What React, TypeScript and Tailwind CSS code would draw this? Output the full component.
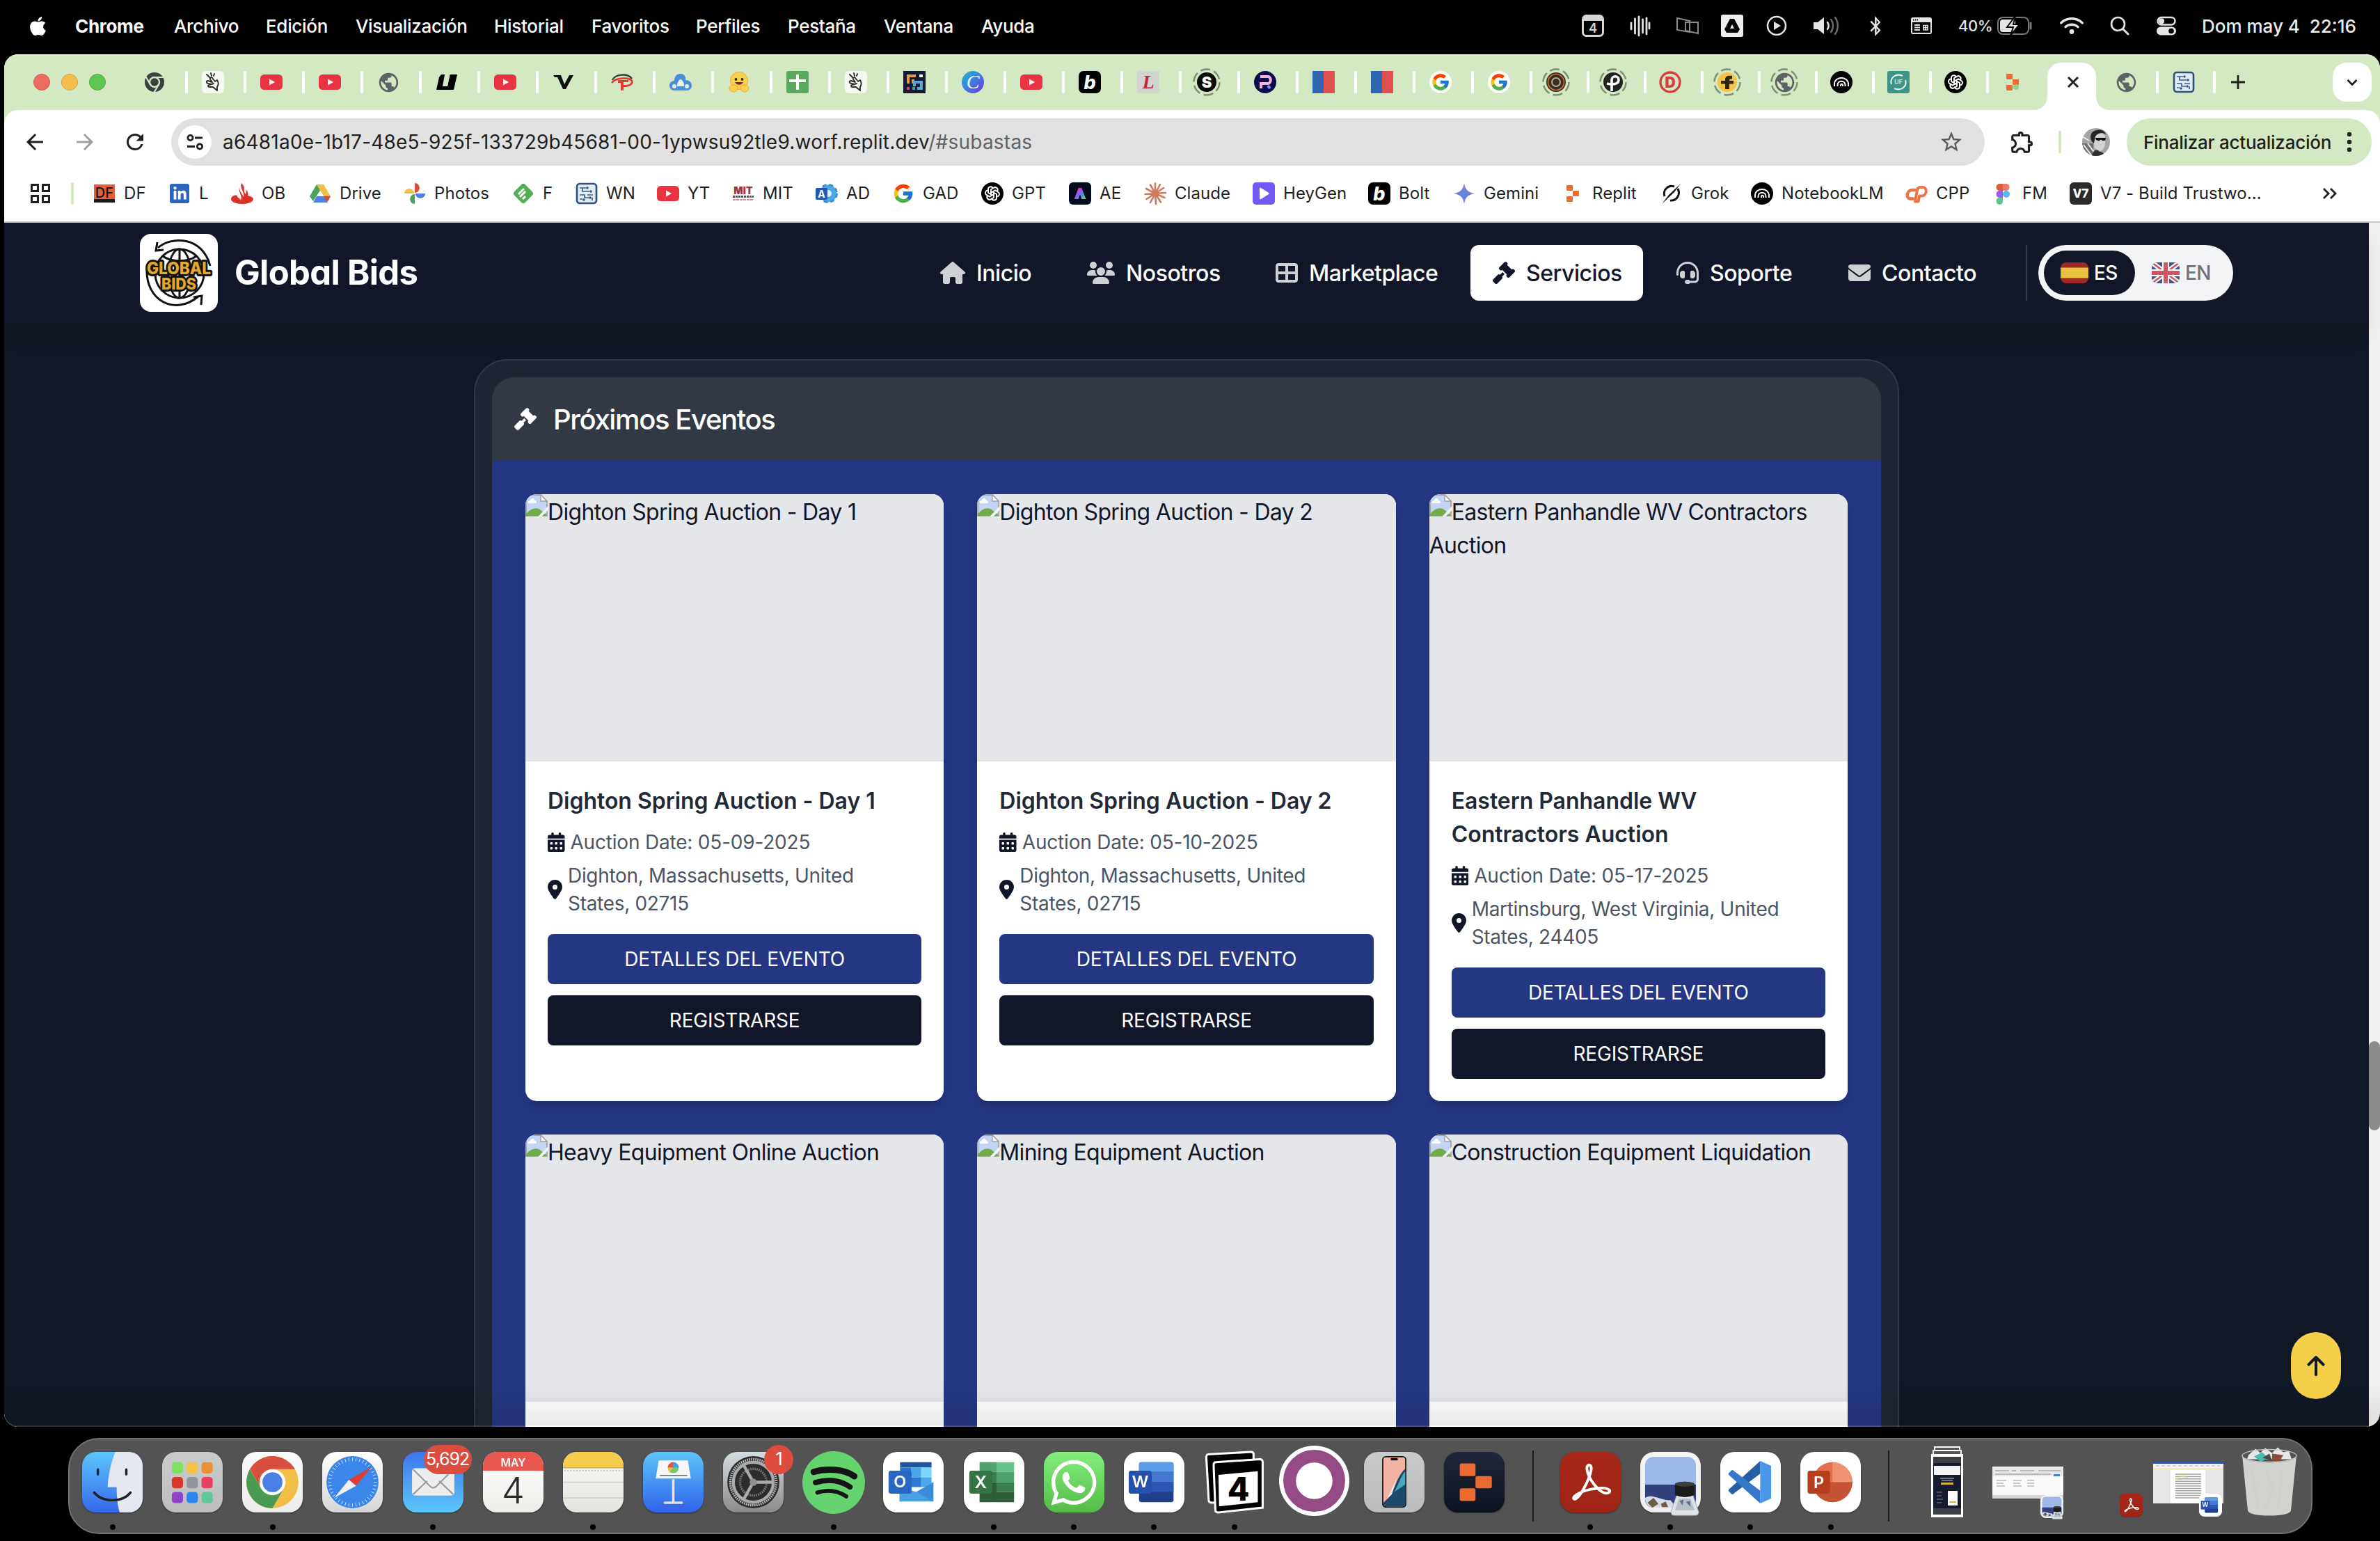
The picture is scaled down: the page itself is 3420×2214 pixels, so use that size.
import React from "react";
import {
  FaApple,
  FaHouse,
  FaUsers,
  FaTableCellsLarge,
  FaGavel,
  FaHeadset,
  FaEnvelope,
  FaCalendarDays,
  FaLocationDot,
  FaBluetoothB,
  FaLinkedinIn,
  FaWhatsapp,
  FaWifi,
} from "react-icons/fa6";
import { FcGoogle } from "react-icons/fc";
import { TbBrandOpenai } from "react-icons/tb";
import {
  MdPublic,
  MdStarBorder,
  MdOutlineExtension,
  MdRefresh,
  MdArrowBack,
  MdArrowForward,
} from "react-icons/md";

type Kids = { children?: React.ReactNode };

/* ------------------------------------------------------------------ */
/* Favicons, all drawn on a 32 x 32 grid                                */
/* ------------------------------------------------------------------ */

const Ico = ({ children }: Kids) => (
  <svg viewBox="0 0 32 32" className="size-8 shrink-0 overflow-visible">
    {children}
  </svg>
);

const Letter = ({
  t,
  fill = "#fff",
  size = 22,
  y = 24,
  font = "Inter",
  italic = false,
  weight = 800,
}: {
  t: string;
  fill?: string;
  size?: number;
  y?: number;
  font?: string;
  italic?: boolean;
  weight?: number;
}) => (
  <text
    x="16"
    y={y}
    textAnchor="middle"
    fontFamily={font}
    fontSize={size}
    fontWeight={weight}
    fontStyle={italic ? "italic" : "normal"}
    fill={fill}
  >
    {t}
  </text>
);

const Ring = () => (
  <circle cx="16" cy="16" r="18.5" fill="none" stroke="#7d8f77" strokeWidth="2.4" strokeDasharray="14 5.4" />
);

const ChromeDark = () => (
  <Ico>
    <circle cx="16" cy="16" r="14" fill="#3c4043" />
    <circle cx="16" cy="16" r="7" fill="none" stroke="#d3e8c3" strokeWidth="2.4" />
    <path d="M16 9H29M10 19.5L3.5 8.3M22 19.5L15.5 30.5" stroke="#d3e8c3" strokeWidth="2.2" />
  </Ico>
);

const Snap = () => (
  <Ico>
    <rect width="32" height="32" rx="6" fill="#f6faf2" />
    <path
      d="M22 28V23C24 20 24 16 22 13L19 15L15 10C13 8 11 10 12 12L15 16L9 14C6 14 6 17 9 18L14 19L10 20C8 21 9 23 11 23L16 23L22 28M14 19L17 18M7 5L11 9M13 3L14 7M18 4L17 7"
      fill="none"
      stroke="#2b2b2b"
      strokeWidth="1.9"
      strokeLinecap="round"
      strokeLinejoin="round"
    />
  </Ico>
);

const YouTube = () => (
  <Ico>
    <rect y="5" width="32" height="22" rx="5.5" fill="#ea3340" />
    <path d="M13 11.5V20.5L21 16Z" fill="#fff" />
  </Ico>
);

const Globe = () => <MdPublic className="size-[33px] shrink-0 text-[#5f6368]" />;

const UMark = () => (
  <Ico>
    <path d="M8 5H14L10.5 22H17L20.5 5H31L26 27H1L5 9Z" fill="#000" />
    <path d="M13 5L10 22H17L20.5 5Z" fill="#d3e8c3" />
  </Ico>
);

const VMark = () => (
  <Ico>
    <path d="M1 6H12L17 19L24 6H30L19 26H15L7 9H3Z" fill="#111" />
  </Ico>
);

const PRed = () => (
  <Ico>
    <path d="M2 13C6 4 24 3 30 11" fill="none" stroke="#2b4438" strokeWidth="2.4" />
    <path d="M1 17C7 9 27 9 30 14C32 20 24 22 16 21.5" fill="none" stroke="#e23b30" strokeWidth="2.8" />
    <path d="M10 13H25V16H18V20H22V23H18V28H14V17H10Z" fill="#e23b30" />
  </Ico>
);

const Cloud = () => (
  <Ico>
    <path d="M16 4C22 4 24 10 23 13C29 13 32 17 32 21C32 25 29 28 25 28H7C3 28 0 25 0 21C0 17 3 14 7 14C7 8 10 4 16 4Z" fill="#4b8fdc" />
    <path d="M16 12C19 12 22 20 21 22H11C10 20 13 12 16 12Z" fill="#e6f1e0" />
    <circle cx="7" cy="22" r="3" fill="#e6f1e0" />
    <circle cx="25" cy="22" r="3" fill="#e6f1e0" />
  </Ico>
);

const Hug = () => (
  <Ico>
    <circle cx="16" cy="14" r="12.5" fill="#f9d24b" stroke="#f0a93c" />
    <circle cx="11.5" cy="12" r="1.9" fill="#33302b" />
    <circle cx="20.5" cy="12" r="1.9" fill="#33302b" />
    <path d="M10.5 16H21.5C21 21 11 21 10.5 16Z" fill="#7b2b2b" />
    <ellipse cx="8" cy="25" rx="6" ry="5" fill="#f9d24b" stroke="#f0a93c" />
    <ellipse cx="24" cy="25" rx="6" ry="5" fill="#f9d24b" stroke="#f0a93c" />
  </Ico>
);

const Sheets = () => (
  <Ico>
    <rect width="32" height="32" rx="3" fill="#5aa95f" />
    <path d="M16 5V27M4 14H28" stroke="#fff" strokeWidth="4" />
  </Ico>
);

const Pixels = () => (
  <Ico>
    <rect width="32" height="32" fill="#161a30" />
    <path d="M5 5H18V9H9V18H5Z" fill="#e59b3c" />
    <path d="M12 12H16V18H12Z" fill="#e59b3c" />
    <path d="M23 5H28V9H23Z" fill="#fff" />
    <path d="M14 14H28V18H18V22H14ZM24 18H28V27H20V23H24Z" fill="#56a8d6" />
    <path d="M5 23H9V27H5Z" fill="#d24862" />
    <path d="M13 23H17V27H13Z" fill="#3aa890" />
  </Ico>
);

const Canva = () => (
  <Ico>
    <defs>
      <linearGradient id="canva" x1="0" y1="0" x2="1" y2="1">
        <stop offset="0" stopColor="#21b8d0" />
        <stop offset="0.5" stopColor="#3f7de0" />
        <stop offset="1" stopColor="#7a2be6" />
      </linearGradient>
    </defs>
    <circle cx="16" cy="16" r="16" fill="url(#canva)" />
    <Letter t="C" font="Liberation Serif" italic weight={400} size={28} y={25} />
  </Ico>
);

const Bolt = () => (
  <Ico>
    <rect width="32" height="32" rx="7" fill="#000" />
    <Letter t="b" italic size={27} y={25.5} />
  </Ico>
);

const LMark = () => (
  <Ico>
    <rect width="32" height="32" fill="#d2d4d0" />
    <Letter t="L" font="Liberation Serif" italic weight={700} fill="#c4243b" size={28} y={25} />
  </Ico>
);

const Disc = ({ bg, r = 16, children }: Kids & { bg: string; r?: number }) => (
  <Ico>
    <circle cx="16" cy="16" r={r} fill={bg} />
    {children}
  </Ico>
);

const Flag = () => (
  <Ico>
    <rect width="16" height="32" fill="#2f66b1" />
    <rect x="16" width="16" height="32" fill="#de514f" />
  </Ico>
);

const GoogleDisc = () => (
  <span className="flex size-8 shrink-0 items-center justify-center rounded-full bg-white">
    <FcGoogle className="size-7" />
  </span>
);

const Notebook = () => (
  <Disc bg="#000">
    <path d="M6 22V19C6 7 26 7 26 19V22M10.5 22V20C10.5 13 21.5 13 21.5 20V22M15 22V21C15 18 18 18 18 21V22" fill="none" stroke="#fff" strokeWidth="2" />
  </Disc>
);

const OpenAI = () => (
  <span className="flex size-8 shrink-0 items-center justify-center rounded-full bg-black text-white">
    <TbBrandOpenai className="size-6" />
  </span>
);

const ReplitMark = ({ dot = false }: { dot?: boolean }) => (
  <Ico>
    <rect x="7" y="4" width="9" height="8" rx="1" fill="#ee6c2c" />
    <rect x="16" y="12" width="9" height="8" rx="1" fill="#ee6c2c" />
    <rect x="7" y="20" width="9" height="8" rx="1" fill="#ee6c2c" />
    {dot && <circle cx="21" cy="23" r="4" fill="#8bd48a" />}
  </Ico>
);

const Circuit = () => (
  <Ico>
    <rect x="2" y="2" width="28" height="28" rx="4" fill="#e3eaf1" stroke="#2f4f80" strokeWidth="2.6" />
    <path d="M6 8H15M10 8V13H20M6 18H13V22H19M6 24H10M17 18H25M24 22V26" fill="none" stroke="#3a608f" strokeWidth="1.7" />
    <circle cx="17" cy="8" r="1.7" fill="#2f4f80" />
    <circle cx="22" cy="13" r="1.7" fill="#2f4f80" />
    <circle cx="21" cy="22" r="1.7" fill="#2f4f80" />
    <circle cx="12" cy="25" r="1.7" fill="#2f4f80" />
  </Ico>
);

type Tab = { id: string; icon: React.ReactNode };

const wideTabs: Tab[] = [
  { id: "chrome", icon: <ChromeDark /> },
  { id: "snap", icon: <Snap /> },
  { id: "yt1", icon: <YouTube /> },
  { id: "yt2", icon: <YouTube /> },
  { id: "globe", icon: <Globe /> },
  { id: "u", icon: <UMark /> },
  { id: "yt3", icon: <YouTube /> },
  { id: "v", icon: <VMark /> },
  { id: "p", icon: <PRed /> },
  { id: "cloud", icon: <Cloud /> },
  { id: "hug", icon: <Hug /> },
  { id: "sheets", icon: <Sheets /> },
  { id: "snap2", icon: <Snap /> },
  { id: "pixels", icon: <Pixels /> },
  { id: "canva", icon: <Canva /> },
  { id: "yt4", icon: <YouTube /> },
  { id: "bolt", icon: <Bolt /> },
  { id: "l", icon: <LMark /> },
  {
    id: "s",
    icon: (
      <Disc bg="#0a0a0a" r={14}>
        <Ring />
        <Letter t="S" size={22} y={24} weight={900} />
      </Disc>
    ),
  },
  {
    id: "pn",
    icon: (
      <Disc bg="#0c0b4f">
        <path d="M10 25V18H20C25 18 25 8 20 8H9" fill="none" stroke="#f0b6d4" strokeWidth="4" />
        <path d="M20 21L23 25" stroke="#7f8df5" strokeWidth="4" />
      </Disc>
    ),
  },
  { id: "f1", icon: <Flag /> },
  { id: "f2", icon: <Flag /> },
  { id: "g1", icon: <GoogleDisc /> },
  { id: "g2", icon: <GoogleDisc /> },
];

const narrowTabs: Tab[] = [
  {
    id: "bronze",
    icon: (
      <Disc bg="#3a2d22" r={14}>
        <Ring />
        <circle cx="16" cy="16" r="11.5" fill="none" stroke="#c4733a" strokeWidth="1.6" />
        <circle cx="16" cy="16" r="6" fill="none" stroke="#b9a894" strokeWidth="2" />
      </Disc>
    ),
  },
  {
    id: "rho",
    icon: (
      <Disc bg="#222" r={14}>
        <Ring />
        <path d="M14 29V13C14 6 24 6 24 13C24 19 15 20 7 18" fill="none" stroke="#fff" strokeWidth="3.6" />
      </Disc>
    ),
  },
  {
    id: "d",
    icon: (
      <Ico>
        <circle cx="16" cy="16" r="14" fill="none" stroke="#da3c3a" strokeWidth="3.4" />
        <Letter t="D" fill="#da3c3a" size={21} y={23.5} weight={900} />
      </Ico>
    ),
  },
  {
    id: "f",
    icon: (
      <Disc bg="#f6c443" r={14}>
        <Ring />
        <path d="M13 26V12C13 7.5 17 6 23 7V11.5C19.5 11.5 19 12 19 14H25V18.5H19V26ZM7 14H13V18.5H7Z" fill="#2e2614" />
      </Disc>
    ),
  },
  {
    id: "globe2",
    icon: (
      <span className="relative flex size-8 items-center justify-center">
        <Globe />
        <svg viewBox="0 0 32 32" className="absolute inset-0 size-8 overflow-visible">
          <Ring />
        </svg>
      </span>
    ),
  },
  { id: "nb", icon: <Notebook /> },
  {
    id: "uf",
    icon: (
      <Ico>
        <rect width="32" height="32" rx="3" fill="#3f9585" />
        <path d="M6 19C3 9 13 3 22 7M26 13C29 23 19 29 10 25" fill="none" stroke="#e4f3ef" strokeWidth="2" />
        <Letter t="UF" size={9} y={19} weight={600} fill="#cfe8e2" />
      </Ico>
    ),
  },
  { id: "oa", icon: <OpenAI /> },
  { id: "rep", icon: <ReplitMark dot /> },
];

/* ------------------------------------------------------------------ */
/* Bookmarks                                                            */
/* ------------------------------------------------------------------ */

const bookmarks: { t: string; w: string; icon: React.ReactNode }[] = [
  {
    t: "DF",
    w: "w-[108px]",
    icon: (
      <Ico>
        <rect x="1" y="3" width="30" height="26" fill="#e06038" />
        <rect x="1" y="24" width="30" height="5" fill="#1a1a1a" />
        <Letter t="DF" size={20} y={22} weight={500} fill="#111" />
      </Ico>
    ),
  },
  {
    t: "L",
    w: "w-[90px]",
    icon: (
      <span className="flex size-8 items-center justify-center">
        <span className="flex size-7 items-center justify-center rounded-[3px] bg-[#2d64bc] text-white">
          <FaLinkedinIn className="size-[21px]" />
        </span>
      </span>
    ),
  },
  {
    t: "OB",
    w: "w-[112px]",
    icon: (
      <Ico>
        <path d="M15 1C22 8 16 12 21 17C22 14 22 12 21 10C25 14 25 17 24 19C29 20 32 22 32 24C32 28 25 31 16 31C7 31 0 28 0 24C0 20 4 19 8 18C8 22 14 23 14 26C17 19 10 14 12 8C13 15 16 16 18 21C20 14 12 9 15 1Z" fill="#da3026" />
      </Ico>
    ),
  },
  {
    t: "Drive",
    w: "w-[136px]",
    icon: (
      <Ico>
        <path d="M11 3H21L16 12L6 27L1 20Z" fill="#4aa45c" />
        <path d="M11 3H21L31 20H21Z" fill="#f2bf42" />
        <path d="M11 20H31L26 29H6Z" fill="#4f81ea" />
        <path d="M21 20H31L26 29Z" fill="#d5503f" />
        <path d="M16 12L21 20H11Z" fill="#fff" />
      </Ico>
    ),
  },
  {
    t: "Photos",
    w: "w-[156px]",
    icon: (
      <Ico>
        <path d="M16 1C25 1 25 15 16 15Z" fill="#d9503f" />
        <path d="M31 16C31 25 17 25 17 16Z" fill="#4f81ea" />
        <path d="M16 31C7 31 7 17 16 17Z" fill="#4aa45c" />
        <path d="M1 16C1 7 15 7 15 16Z" fill="#f2bf42" />
      </Ico>
    ),
  },
  {
    t: "F",
    w: "w-[91px]",
    icon: (
      <Ico>
        <rect x="5" y="5" width="22" height="22" rx="4" transform="rotate(45 16 16)" fill="#52ae57" />
        <path d="M9 17L17 9M11 21L19 13M15 24L19 20" stroke="#fff" strokeWidth="3" />
      </Ico>
    ),
  },
  { t: "WN", w: "w-[117px]", icon: <Circuit /> },
  { t: "YT", w: "w-[108px]", icon: <YouTube /> },
  {
    t: "MIT",
    w: "w-[120px]",
    icon: (
      <Ico>
        <text x="16" y="17" textAnchor="middle" fontFamily="Inter" fontWeight="900" fontSize="14" fill="#9b3340">MIT</text>
        <path d="M1 20.5H31" stroke="#555" strokeWidth="3" strokeDasharray="3 1" />
        <path d="M1 25H31" stroke="#cf8a92" strokeWidth="2" strokeDasharray="4 1" />
      </Ico>
    ),
  },
  {
    t: "AD",
    w: "w-[110px]",
    icon: (
      <Ico>
        <circle cx="18" cy="16" r="12.5" fill="#4ea8e6" stroke="#3a8fd8" strokeWidth="3" strokeDasharray="6 4" />
        <circle cx="18" cy="16" r="5" fill="#dfeefa" />
        <rect y="8" width="17" height="17" rx="2" fill="#2457b2" />
        <text x="8.5" y="22" textAnchor="middle" fontFamily="Inter" fontWeight="700" fontSize="14" fill="#fff">A</text>
      </Ico>
    ),
  },
  { t: "GAD", w: "w-[128px]", icon: <FcGoogle className="size-8" /> },
  { t: "GPT", w: "w-[126px]", icon: <OpenAI /> },
  {
    t: "AE",
    w: "w-[108px]",
    icon: (
      <Ico>
        <defs>
          <linearGradient id="ae" x1="0" y1="0" x2="1" y2="1">
            <stop offset="0" stopColor="#f0403a" />
            <stop offset="0.35" stopColor="#b24bf0" />
            <stop offset="0.65" stopColor="#4a86f5" />
            <stop offset="1" stopColor="#6fd25a" />
          </linearGradient>
        </defs>
        <rect width="32" height="32" rx="6" fill="#050a1c" />
        <path d="M9 23L14.5 9H17.5L23 23H19L16 14L13 23Z" fill="url(#ae)" stroke="url(#ae)" strokeWidth="2" />
      </Ico>
    ),
  },
  {
    t: "Claude",
    w: "w-[156px]",
    icon: (
      <Ico>
        <path
          d="M16 16L16 1.5M16 16L23 3M16 16L28 8M16 16L31 15M16 16L29.5 22M16 16L24 28.5M16 16L17 31M16 16L9 29M16 16L3.5 24M16 16L1.5 17M16 16L3 9M16 16L9 3.5"
          stroke="#cf7a5a"
          strokeWidth="2.6"
          strokeLinecap="round"
        />
      </Ico>
    ),
  },
  {
    t: "HeyGen",
    w: "w-[166px]",
    icon: (
      <Ico>
        <rect width="32" height="32" rx="5" fill="#7559f4" />
        <path d="M10 9C10 8 11 7.5 12 8L23 15C24 16 24 16.5 23 17L12 24C11 24.5 10 24 10 23Z" fill="#fff" />
      </Ico>
    ),
  },
  { t: "Bolt", w: "w-[122px]", icon: <Bolt /> },
  {
    t: "Gemini",
    w: "w-[156px]",
    icon: (
      <Ico>
        <defs>
          <linearGradient id="gem" x1="0" y1="1" x2="1" y2="0">
            <stop offset="0" stopColor="#4a8ae8" />
            <stop offset="1" stopColor="#8d7cc9" />
          </linearGradient>
        </defs>
        <path d="M16 1C17.5 10.5 21.5 14.5 31 16C21.5 17.5 17.5 21.5 16 31C14.5 21.5 10.5 17.5 1 16C10.5 14.5 14.5 10.5 16 1Z" fill="url(#gem)" />
      </Ico>
    ),
  },
  { t: "Replit", w: "w-[142px]", icon: <ReplitMark /> },
  {
    t: "Grok",
    w: "w-[130px]",
    icon: (
      <Ico>
        <path d="M25 9C29 17 24 27 14 26M20 6C11 3 3 11 6 20" fill="none" stroke="#111" strokeWidth="3" />
        <path d="M2 31L12 18L29 2L20 14Z" fill="#111" />
      </Ico>
    ),
  },
  { t: "NotebookLM", w: "w-[222px]", icon: <Notebook /> },
  {
    t: "CPP",
    w: "w-[124px]",
    icon: (
      <Ico>
        <path d="M14 11H10C2 11 0 23 7 23.5H11" fill="none" stroke="#ec7445" strokeWidth="4.4" strokeLinecap="round" />
        <path d="M14 27.5L17 11C17.5 8 19 7 22 7H25C32 7 31 19 24 19.5H20L18.5 27.5Z" fill="none" stroke="#ec7445" strokeWidth="4" strokeLinejoin="round" />
      </Ico>
    ),
  },
  {
    t: "FM",
    w: "w-[112px]",
    icon: (
      <Ico>
        <path d="M16 2H11C5 2 5 12 11 12H16Z" fill="#e35b33" />
        <path d="M16 2H21C27 2 27 12 21 12H16Z" fill="#ee7a6a" />
        <path d="M16 12H11C5 12 5 22 11 22H16Z" fill="#9a5cf6" />
        <circle cx="21" cy="17" r="5" fill="#56b6f7" />
        <path d="M16 22H11C5 22 5 32 11 32C14 32 16 30 16 27Z" fill="#5cc98a" />
      </Ico>
    ),
  },
  {
    t: "V7 - Build Trustwo...",
    w: "w-[290px]",
    icon: (
      <Ico>
        <rect width="32" height="32" rx="6" fill="#2a2a2a" />
        <Letter t="V7" size={17} y={22} weight={800} />
      </Ico>
    ),
  },
];

/* ------------------------------------------------------------------ */
/* macOS menu bar                                                       */
/* ------------------------------------------------------------------ */

const menus: { t: string; w: string; bold?: boolean }[] = [
  { t: "Chrome", w: "w-[142px]", bold: true },
  { t: "Archivo", w: "w-[132px]" },
  { t: "Edición", w: "w-[129px]" },
  { t: "Visualización", w: "w-[199px]" },
  { t: "Historial", w: "w-[140px]" },
  { t: "Favoritos", w: "w-[150px]" },
  { t: "Perfiles", w: "w-[132px]" },
  { t: "Pestaña", w: "w-[138px]" },
  { t: "Ventana", w: "w-[140px]" },
  { t: "Ayuda", w: "w-[90px]" },
];

const Slot = ({ w, children }: Kids & { w: string }) => (
  <span className={`flex shrink-0 items-center justify-center ${w}`}>{children}</span>
);

function MenuBar() {
  return (
    <div className="flex h-[78px] items-center bg-black pr-[33px] pb-[4px] pl-[39px] text-[26px] text-white">
      <FaApple className="mr-[38px] size-[31px] shrink-0" />
      {menus.map((m) => (
        <span key={m.t} className={`shrink-0 whitespace-nowrap tracking-[-0.012em] ${m.w} ${m.bold ? "font-bold" : "font-medium"}`}>
          {m.t}
        </span>
      ))}
      <div className="ml-auto flex items-center text-[#e4e4e4]">
        <Slot w="w-[68px]">
          <Ico>
            <rect x="1.5" y="1.5" width="29" height="29" rx="5" fill="none" stroke="#d6d6d6" strokeWidth="3" />
            <path d="M1 3H31V9H1Z" fill="#d6d6d6" />
            <Letter t="4" size={18} y={26} weight={600} fill="#d6d6d6" />
          </Ico>
        </Slot>
        <Slot w="w-[68px]">
          <Ico>
            <path d="M3 12V21M8.5 6V27M14 3V30M19.5 7V26M25 5V28M29 12V20" stroke="#e4e4e4" strokeWidth="2.8" strokeLinecap="round" />
          </Ico>
        </Slot>
        <Slot w="w-[68px]">
          <Ico>
            <path d="M1 5L19 9V25L1 22ZM13 11H31V27L13 23Z" fill="none" stroke="#8b8b8b" strokeWidth="2" />
          </Ico>
        </Slot>
        <Slot w="w-[60px]">
          <Ico>
            <rect width="32" height="32" rx="3" fill="#eee" />
            <path d="M13 6H19L27 21L24 26H8L5 21ZM16 14L13 20H19Z" fill="#000" fillRule="evenodd" />
          </Ico>
        </Slot>
        <Slot w="w-[68px]">
          <Ico>
            <circle cx="16" cy="16" r="13" fill="none" stroke="#e4e4e4" strokeWidth="2.5" />
            <path d="M12 10V22L22 16Z" fill="#e4e4e4" />
          </Ico>
        </Slot>
        <Slot w="w-[74px]">
          <svg viewBox="0 0 40 32" className="h-8 w-10">
            <path d="M2 11H8L17 4V28L8 21H2Z" fill="#e4e4e4" />
            <path d="M22 11C24 14 24 18 22 21" fill="none" stroke="#e4e4e4" strokeWidth="2.5" strokeLinecap="round" />
            <path d="M27 7C31 12 31 20 27 25M33 4C38 11 38 21 33 28" fill="none" stroke="#6a6a6a" strokeWidth="2.5" strokeLinecap="round" />
          </svg>
        </Slot>
        <Slot w="w-[68px]">
          <FaBluetoothB className="h-[29px] w-[24px]" />
        </Slot>
        <Slot w="w-[64px]">
          <Ico>
            <rect x="1" y="4" width="30" height="24" rx="3" fill="#e4e4e4" />
            <path d="M4 7.5H11" stroke="#000" strokeWidth="2" strokeDasharray="1.5 1.5" />
            <rect x="3" y="11" width="26" height="15" fill="#000" />
            <path d="M6 15H14M6 18.5H14M6 22H14" stroke="#e4e4e4" strokeWidth="1.8" />
            <path d="M19 15.5H25V22H19ZM19 18.7H25M22 15.5V22" fill="none" stroke="#e4e4e4" strokeWidth="1.6" />
          </Ico>
        </Slot>
        <span className="ml-[21px] w-[56px] text-[22px] font-medium tracking-[-0.02em]">40%</span>
        <svg viewBox="0 0 52 28" className="mr-[38px] h-7 w-[52px]">
          <rect x="1" y="2" width="44" height="24" rx="7" fill="none" stroke="#777" strokeWidth="2" />
          <rect x="4" y="5" width="22" height="18" rx="4" fill="#e4e4e4" />
          <path d="M48 10V18" stroke="#777" strokeWidth="3" strokeLinecap="round" />
          <path d="M26 0L14 16H23L19 28L32 12H23Z" fill="#e4e4e4" stroke="#000" strokeWidth="2" />
        </svg>
        <FaWifi className="mr-[38px] size-[34px]" />
        <svg viewBox="0 0 28 28" className="mr-[39px] size-7">
          <circle cx="11.5" cy="11.5" r="9.5" fill="none" stroke="#e4e4e4" strokeWidth="2.6" />
          <path d="M18.5 18.5L26 26" stroke="#e4e4e4" strokeWidth="3" strokeLinecap="round" />
        </svg>
        <svg viewBox="0 0 28 28" className="mr-[37px] size-7">
          <rect x="1.5" y="2" width="25" height="10.5" rx="5.25" fill="none" stroke="#e4e4e4" strokeWidth="2.4" />
          <circle cx="7" cy="7.2" r="4" fill="#e4e4e4" />
          <rect y="15.5" width="28" height="12" rx="6" fill="#e4e4e4" />
          <circle cx="21" cy="21.5" r="3.8" fill="#000" />
        </svg>
        <span className="w-[223px] font-medium tracking-[0em] whitespace-nowrap text-[#ececec]">{"Dom may 4\u00a0\u00a022:16"}</span>
      </div>
    </div>
  );
}

/* ------------------------------------------------------------------ */
/* Browser chrome                                                       */
/* ------------------------------------------------------------------ */

function TabStrip() {
  return (
    <div className="flex h-20 items-center border-t-2 border-[#e4f2d9] bg-[#d3e8c3] pb-[2px]">
      <div className="flex w-[180px] shrink-0 gap-4 pl-[42px]">
        <span className="size-6 rounded-full border border-[#d5584c] bg-[#ec6a5e]" />
        <span className="size-6 rounded-full border border-[#dca03c] bg-[#f4bf4f]" />
        <span className="size-6 rounded-full border border-[#4fa73e] bg-[#61c554]" />
      </div>
      {wideTabs.map((t) => (
        <div key={t.id} className="flex w-[84px] shrink-0 items-center justify-between">
          <span className="flex w-[72px] justify-center">{t.icon}</span>
          <span className="h-8 w-1 rounded-full bg-white" />
        </div>
      ))}
      {narrowTabs.map((t, i) => (
        <div key={t.id} className="flex w-[82px] shrink-0 items-center justify-between">
          <span className="flex w-[68px] justify-center">{t.icon}</span>
          {i < narrowTabs.length - 1 && <span className="h-8 w-1 rounded-full bg-white" />}
        </div>
      ))}
      <div className="relative mt-[10px] -mb-[2px] ml-[2px] flex h-[68px] w-[70px] shrink-0 items-center justify-center self-start rounded-t-[20px] bg-white pb-3 pl-[4px]">
        <svg viewBox="0 0 20 20" className="absolute bottom-0 -left-5 size-5">
          <path d="M20 0V20H0C12 20 20 12 20 0Z" fill="#fff" />
        </svg>
        <svg viewBox="0 0 20 20" className="absolute -right-5 bottom-0 size-5">
          <path d="M0 0V20H20C8 20 0 12 0 0Z" fill="#fff" />
        </svg>
        <svg viewBox="0 0 20 20" className="size-5">
          <path d="M3 3L17 17M17 3L3 17" stroke="#1f1f1f" strokeWidth="3" />
        </svg>
      </div>
      <div className="flex w-[90px] shrink-0 items-center justify-between">
        <span className="flex w-[88px] justify-center">
          <Globe />
        </span>
        <span className="h-8 w-1 shrink-0 rounded-full bg-white" />
      </div>
      <div className="flex w-[82px] shrink-0 items-center justify-between">
        <span className="flex w-[72px] justify-center">
          <Circuit />
        </span>
        <span className="h-8 w-1 rounded-full bg-white" />
      </div>
      <svg viewBox="0 0 22 22" className="ml-[21px] size-[22px] shrink-0">
        <path d="M11 1V21M1 11H21" stroke="#1f1f1f" strokeWidth="2.8" />
      </svg>
      <span className="mr-3 ml-auto flex size-14 items-center justify-center rounded-[20px] bg-white">
        <svg viewBox="0 0 16 16" className="size-4">
          <path d="M1.5 5L8 11.5L14.5 5" fill="none" stroke="#1f1f1f" strokeWidth="2.8" />
        </svg>
      </span>
    </div>
  );
}

function Avatar() {
  return (
    <svg viewBox="0 0 40 40" className="size-10 shrink-0">
      <defs>
        <clipPath id="face">
          <circle cx="20" cy="20" r="20" />
        </clipPath>
      </defs>
      <g clipPath="url(#face)">
        <rect width="40" height="40" fill="#a5a5a5" />
        <path d="M0 22H16V40H0Z" fill="#6e6e6e" />
        <path d="M2 24L14 40M8 22L18 36M0 32L10 40M0 12L10 18" stroke="#ececec" strokeWidth="2" />
        <path d="M15 12C17 5 32 3 33 13L33 20C33 28 30 33 25 33L18 29Z" fill="#d3d3d3" />
        <path d="M12 13C12 1 31 -1 34 9C29 6 22 7 19 12L17 22C14 20 12 17 12 13Z" fill="#262626" />
        <path d="M19 14H34L33 18H29L27 16.5L24 18.5L20 17Z" fill="#111" />
        <path d="M14 40C16 32 20 29 25 34C29 34 31 36 32 40Z" fill="#303030" />
      </g>
    </svg>
  );
}

function Toolbar() {
  return (
    <div className="flex h-[92px] items-center rounded-t-[20px] bg-white pl-[26px] text-[#1f1f1f]">
      <MdArrowBack className="mr-[36px] size-9 shrink-0" />
      <MdArrowForward className="mr-[36px] size-9 shrink-0 text-[#a0a0a0]" />
      <MdRefresh className="mr-[34px] size-9 shrink-0" />
      <div className="flex h-[68px] w-[2606px] shrink-0 items-center rounded-full bg-[#e1e1e1] pr-[30px] pl-[10px]">
        <span className="mr-[16px] flex size-12 shrink-0 items-center justify-center rounded-full bg-white">
          <svg viewBox="0 0 28 28" className="size-7">
            <circle cx="7.5" cy="8" r="3.6" fill="none" stroke="#1f1f1f" strokeWidth="2.8" />
            <circle cx="21" cy="20.5" r="3.6" fill="none" stroke="#1f1f1f" strokeWidth="2.8" />
            <path d="M14 8H25M3 20.5H14" stroke="#1f1f1f" strokeWidth="2.8" />
          </svg>
        </span>
        <span className="text-[28px] tracking-[0.0078em] whitespace-nowrap">
          a6481a0e-1b17-48e5-925f-133729b45681-00-1ypwsu92tle9.worf.replit.dev
          <span className="text-[#5f6368]">/#subastas</span>
        </span>
        <MdStarBorder className="ml-auto size-9 text-[#5b5b5b]" />
      </div>
      <MdOutlineExtension className="mr-[33px] ml-[35px] size-[38px] shrink-0" />
      <span className="mr-[30px] h-8 w-1 shrink-0 rounded-full bg-[#d3e8c3]" />
      <Avatar />
      <div className="ml-[24px] flex h-[68px] w-[352px] shrink-0 items-center rounded-full bg-[#d3e8c3] pl-[24px]">
        <span className="w-[292px] text-[26px] font-medium tracking-[-0.01em] whitespace-nowrap">Finalizar actualización</span>
        <svg viewBox="0 0 8 30" className="h-[30px] w-2">
          <circle cx="4" cy="4" r="3.2" fill="#1f1f1f" />
          <circle cx="4" cy="15" r="3.2" fill="#1f1f1f" />
          <circle cx="4" cy="26" r="3.2" fill="#1f1f1f" />
        </svg>
      </div>
    </div>
  );
}

function BookmarkBar() {
  return (
    <div className="flex h-[70px] items-center border-b-2 border-[#c9c9c9] bg-white pb-[12px] pl-[38px] text-[#1f1f1f]">
      <svg viewBox="0 0 28 28" className="size-7 shrink-0">
        <path d="M1.5 1.5H10.5V10.5H1.5ZM17.5 1.5H26.5V10.5H17.5ZM1.5 17.5H10.5V26.5H1.5ZM17.5 17.5H26.5V26.5H17.5Z" fill="none" stroke="#1f1f1f" strokeWidth="3" />
      </svg>
      <span className="mr-[28px] ml-[30px] h-8 w-1 shrink-0 rounded-full bg-[#d3e8c3]" />
      {bookmarks.map((b) => (
        <span key={b.t} className={`flex shrink-0 items-center gap-3 text-[24px] font-normal tracking-[0.003em] whitespace-nowrap ${b.w}`}>
          {b.icon}
          {b.t}
        </span>
      ))}
      <svg viewBox="0 0 22 18" className="mr-[61px] ml-auto h-[18px] w-[22px]">
        <path d="M2 2L9 9L2 16M12 2L19 9L12 16" fill="none" stroke="#1f1f1f" strokeWidth="2.8" />
      </svg>
    </div>
  );
}

/* ------------------------------------------------------------------ */
/* Web page                                                             */
/* ------------------------------------------------------------------ */

function Logo() {
  return (
    <svg viewBox="0 0 112 112" className="size-28 shrink-0 rounded-2xl bg-white">
      <g fill="none" stroke="#111" strokeWidth="3">
        <circle cx="57" cy="57" r="35" />
        <ellipse cx="57" cy="57" rx="16" ry="35" />
        <path d="M57 22V92M33 32C45 41 69 41 81 32M33 82C45 73 69 73 81 82" />
        <path d="M26 20C45 3 90 3 101 46M10 50C8 96 50 118 84 90" />
        <path d="M25 12L23 24L34 23M88 102L89 89L77 91" />
      </g>
      <g fontFamily="Inter" fontWeight="800" textAnchor="middle" paintOrder="stroke" stroke="#14120c" strokeWidth="6" strokeLinejoin="round" fill="#e4a92c">
        <text x="56" y="58" fontSize="24" textLength="92" lengthAdjust="spacingAndGlyphs">GLOBAL</text>
        <text x="56" y="80" fontSize="23" textLength="50" lengthAdjust="spacingAndGlyphs">BIDS</text>
      </g>
    </svg>
  );
}

const navItems: { t: string; w: string; icon: React.ReactNode; active?: boolean }[] = [
  { t: "Inicio", w: "w-[79px]", icon: <FaHouse className="h-8 w-9" /> },
  { t: "Nosotros", w: "w-[135px]", icon: <FaUsers className="h-8 w-10" /> },
  { t: "Marketplace", w: "w-[184px]", icon: <FaTableCellsLarge className="size-8" /> },
  { t: "Servicios", w: "w-[136px]", icon: <FaGavel className="size-8" />, active: true },
  { t: "Soporte", w: "w-[119px]", icon: <FaHeadset className="size-8" /> },
  { t: "Contacto", w: "w-[135px]", icon: <FaEnvelope className="size-8" /> },
];

const FlagES = () => (
  <svg viewBox="0 0 40 30" className="h-[30px] w-10 rounded-[8px]">
    <path d="M0 0H40V30H0Z" fill="#9e2927" />
    <path d="M0 7.5H40V22.5H0Z" fill="#e8c23f" />
  </svg>
);

const FlagUK = () => (
  <svg viewBox="0 0 40 30" className="h-[30px] w-10 rounded-[8px]">
    <path d="M0 0H40V30H0Z" fill="#3e4f8a" />
    <path d="M0 0L40 30M40 0L0 30" stroke="#fff" strokeWidth="7" />
    <path d="M0 0L40 30M40 0L0 30" stroke="#cd5663" strokeWidth="2.6" />
    <path d="M20 0V30M0 15H40" stroke="#fff" strokeWidth="10" />
    <path d="M20 0V30M0 15H40" stroke="#cd5663" strokeWidth="6" />
  </svg>
);

function SiteHeader() {
  return (
    <header className="relative z-10 flex h-36 shrink-0 items-center bg-[#111629] px-[195px] text-white shadow-[0_20px_30px_-6px_rgba(0,0,0,0.12)]">
      <Logo />
      <span className="ml-[24px] text-[49px] font-bold tracking-[-0.014em] [font-feature-settings:'cv11']">Global Bids</span>
      <nav className="ml-auto flex gap-4">
        {navItems.map((n) => (
          <a
            key={n.t}
            className={`flex h-20 items-center gap-4 rounded-xl px-8 text-[32px] font-medium tracking-[-0.014em] ${
              n.active ? "bg-white text-[#111629]" : "text-white"
            }`}
          >
            <span className={n.active ? "" : "opacity-80"}>{n.icon}</span>
            <span className={`pt-[2px] whitespace-nowrap ${n.w}`}>{n.t}</span>
          </a>
        ))}
      </nav>
      <span className="mr-4 ml-[40px] h-20 w-[2px] bg-[#363a4b]" />
      <div className="flex h-20 w-[280px] items-center rounded-full bg-[#f3f4f6] pl-2 text-[28px] font-medium">
        <span className="flex h-16 w-[131px] items-center gap-2 rounded-full bg-[#111629] pl-6">
          <FlagES />
          <span className="tracking-[-0.02em]">ES</span>
        </span>
        <span className="flex items-center gap-2 pl-6 text-[#6b7280]">
          <FlagUK />
          <span className="tracking-[-0.02em]">EN</span>
        </span>
      </div>
    </header>
  );
}

const BrokenImage = () => (
  <svg viewBox="0 0 32 32" className="-mt-[2px] inline size-8 align-top">
    <path d="M1 1H22L31 10V31H1Z" fill="#c4d4f4" stroke="#a3a3a3" strokeWidth="1.8" />
    <path d="M22 1V10H31Z" fill="#fff" stroke="#a3a3a3" strokeWidth="1.5" />
    <path d="M4 13C3 10 6 9 7 9C8 5 13 5 13 9C16 9 17 12 15 13Z" fill="#fff" />
    <path d="M1 31V29C7 20 17 18 22 23L30 29V31Z" fill="#70ac4a" />
    <path d="M18 32.5L32.5 17V23L23 32.5Z" fill="#f0f1f4" />
  </svg>
);

type Event = { title: string; date: string; place: string };

const events: Event[] = [
  { title: "Dighton Spring Auction - Day 1", date: "05-09-2025", place: "Dighton, Massachusetts, United States, 02715" },
  { title: "Dighton Spring Auction - Day 2", date: "05-10-2025", place: "Dighton, Massachusetts, United States, 02715" },
  { title: "Eastern Panhandle WV Contractors Auction", date: "05-17-2025", place: "Martinsburg, West Virginia, United States, 24405" },
];

const laterEvents = ["Heavy Equipment Online Auction", "Mining Equipment Auction", "Construction Equipment Liquidation"];

const Picture = ({ alt }: { alt: string }) => (
  <div className="h-96 bg-[#e5e6ea] pt-[2px] text-[32px] leading-[48px] tracking-[-0.021em] text-[#111629]">
    <BrokenImage />
    {alt}
  </div>
);

function EventCard({ e }: { e: Event }) {
  return (
    <article className="flex flex-col overflow-hidden rounded-2xl bg-white shadow-[0_8px_14px_-2px_rgba(0,0,0,0.2)]">
      <Picture alt={e.title} />
      <div className="px-8 pt-[33px] pb-8">
        <h3 className="mb-[15px] text-[32px] leading-[48px] font-semibold tracking-[-0.001em] text-[#1f2937]">{e.title}</h3>
        <div className="mb-2 flex items-center gap-2 text-[28px] leading-10 text-[#4b5563]">
          <FaCalendarDays className="h-7 w-[24.5px] shrink-0 text-[#111629]" />
          <span className="tracking-[-0.007em] whitespace-nowrap">Auction Date: {e.date}</span>
        </div>
        <div className="mb-6 flex items-center gap-2 text-[28px] leading-10 text-[#4b5563]">
          <FaLocationDot className="h-7 w-[21px] shrink-0 text-[#111629]" />
          <span className="pr-6 tracking-[-0.011em]">{e.place}</span>
        </div>
        <div className="flex flex-col gap-4 text-[28px] tracking-[-0.006em] text-white">
          <a className="flex h-[72px] items-center justify-center rounded-lg bg-[#253783]">DETALLES DEL EVENTO</a>
          <a className="flex h-[72px] items-center justify-center rounded-lg bg-[#111629]">REGISTRARSE</a>
        </div>
      </div>
    </article>
  );
}

function WebPage() {
  return (
    <div className="relative flex h-[1730px] overflow-hidden rounded-b-[20px] bg-[#111825]">
      <div className="flex flex-1 flex-col">
        <SiteHeader />
        <div className="mt-[52px] ml-[675px] h-[1600px] w-[2048px] shrink-0 rounded-[48px] border-2 border-[#33374a] bg-[#1f2532] p-6">
          <div className="overflow-hidden rounded-t-[32px]">
            <h2 className="flex h-[120px] items-center gap-6 bg-[#333944] pl-8 text-[40px] font-medium tracking-[-0.035em] text-white">
              <FaGavel className="size-8" />
              <span className="pt-[2px]">Próximos Eventos</span>
            </h2>
            <div className="grid grid-cols-3 gap-12 bg-[#253783] p-12">
              {events.map((e) => (
                <EventCard key={e.title} e={e} />
              ))}
              {laterEvents.map((t) => (
                <article key={t} className="h-[872px] overflow-hidden rounded-2xl bg-white">
                  <Picture alt={t} />
                </article>
              ))}
            </div>
          </div>
        </div>
      </div>
      <div className="w-4 shrink-0 bg-[#f1f1f1] pt-[1176px]">
        <div className="h-32 rounded-full bg-[#8b8b8b]" />
      </div>
      <div className="absolute right-0 bottom-0 left-0 h-[60px] rounded-b-[20px] border-b-2 border-white/10 bg-gradient-to-b from-transparent to-black/8" />
      <button className="absolute right-[56px] bottom-[40px] flex h-24 w-[72px] items-center justify-center rounded-full bg-[#f4d04a]">
        <svg viewBox="0 0 28 30" className="h-[30px] w-7">
          <path d="M14 28V3M3.5 13.5L14 3L24.5 13.5" fill="none" stroke="#111825" strokeWidth="4" strokeLinecap="round" strokeLinejoin="round" />
        </svg>
      </button>
    </div>
  );
}

/* ------------------------------------------------------------------ */
/* Dock                                                                 */
/* ------------------------------------------------------------------ */

const Tile = ({ bg, children, id }: Kids & { bg: [string, string]; id: string }) => (
  <svg viewBox="0 0 100 100" className="size-[87px] overflow-visible drop-shadow-[0_1px_1px_rgba(0,0,0,0.4)]">
    <defs>
      <linearGradient id={id} x1="0" y1="0" x2="0" y2="1">
        <stop offset="0" stopColor={bg[0]} />
        <stop offset="1" stopColor={bg[1]} />
      </linearGradient>
      <clipPath id={`${id}-clip`}>
        <rect width="100" height="100" rx="23" />
      </clipPath>
    </defs>
    <rect width="100" height="100" rx="23" fill={`url(#${id})`} />
    <g clipPath={`url(#${id}-clip)`}>{children}</g>
  </svg>
);

const T = ({ x, y, s, f, w = 600, children }: Kids & { x: number; y: number; s: number; f: string; w?: number }) => (
  <text x={x} y={y} fontSize={s} fill={f} fontWeight={w} fontFamily="Inter" textAnchor="middle">
    {children}
  </text>
);

const launchColors = ["#7ee35a", "#f5c242", "#ec8f35", "#d8382b", "#8f979c", "#e8405f", "#8e44c9", "#2f86f0", "#5fc79a"];

const tooth = Array.from({ length: 40 }, (_, i) => i * 9);

const Acrobat = ({ id }: { id: string }) => (
  <Tile id={id} bg={["#a82819", "#9f2416"]}>
    <path
      d="M23 78C17 73 40 62 62 60C82 58 86 66 78 68C66 70 46 45 44 28C44 18 53 20 51 30C48 46 32 78 23 78Z"
      fill="none"
      stroke="#fff"
      strokeWidth="4.5"
      strokeLinejoin="round"
    />
  </Tile>
);

const WordIcon = ({ id }: { id: string }) => (
  <Tile id={id} bg={["#fff", "#fff"]}>
    <rect x="25" y="17" width="57" height="66" rx="4" fill="#1f3f8b" />
    <path d="M25 21C25 18 27 17 29 17H78C81 17 82 19 82 21V33H25Z" fill="#5b9de6" />
    <path d="M25 33H82V50H25Z" fill="#4479cf" />
    <path d="M25 50H82V66H25Z" fill="#2c55b5" />
    <rect x="8" y="31" width="38" height="38" rx="4" fill="#2450ae" />
    <T x={27} y={59} s={27} f="#fff">W</T>
  </Tile>
);

const Preview = ({ id }: { id: string }) => (
  <Tile id={id} bg={["#f4f4f4", "#eee"]}>
    <rect x="8" y="8" width="84" height="84" rx="14" fill="#9db9ea" />
    <path d="M8 54H92V78C92 86 86 92 78 92H22C14 92 8 86 8 78Z" fill="#34407c" />
    <path d="M8 76C18 68 34 80 50 80L60 92H22C14 92 8 86 8 76Z" fill="#d8dce6" />
    <path d="M12 84L22 76L30 86L20 92ZM34 86L42 82L46 91H36Z" fill="#6b5c4c" />
  </Tile>
);

const Loupe = ({ place }: { place: string }) => (
  <svg viewBox="0 0 52 60" className={`absolute ${place}`}>
    <path d="M12 24H40L50 53Q50 59 44 59H8Q2 59 2 53Z" fill="#dfe3e6" stroke="#9fa4a8" />
    <path d="M16 30H36L43 50H9Z" fill="#b5bfc8" />
    <path d="M17 34L24 32L22 42ZM28 36L35 34L36 44Z" fill="#5d7188" />
    <path d="M9 5Q26 -3 43 5V24Q26 31 9 24Z" fill="#1b1b1b" />
    <ellipse cx="26" cy="5" rx="17" ry="4.2" fill="#3e3e3e" />
  </svg>
);

type App = { id: string; icon: React.ReactNode; running?: boolean; badge?: string };

const apps: App[] = [
  {
    id: "finder",
    running: true,
    icon: (
      <Tile id="finder" bg={["#5cc6fb", "#3668ec"]}>
        <path d="M55 0C48 15 43 40 42 58H57C57 75 59 90 62 100H100V0Z" fill="#e4e8f0" />
        <path d="M26 29V37M73 29V37" stroke="#222" strokeWidth="4" strokeLinecap="round" />
        <path d="M20 67C34 84 66 84 80 67" fill="none" stroke="#222" strokeWidth="4" strokeLinecap="round" />
      </Tile>
    ),
  },
  {
    id: "launchpad",
    icon: (
      <Tile id="launch" bg={["#cacccc", "#bdbdbd"]}>
        {launchColors.map((c, i) => (
          <rect key={c} x={16 + (i % 3) * 24.5} y={17 + Math.floor(i / 3) * 24.5} width="18.5" height="18.5" rx="5" fill={c} />
        ))}
      </Tile>
    ),
  },
  {
    id: "chrome",
    running: true,
    icon: (
      <Tile id="chromeapp" bg={["#fafafa", "#ececec"]}>
        <circle cx="50" cy="50" r="43" fill="#f2bf46" />
        <path d="M13 28A43 43 0 0 1 87.2 28.5H50L31.4 60.7Z" fill="#d94f3f" />
        <path d="M12.8 28.5A43 43 0 0 0 50 93L68.6 60.7L50 71.5L31.4 60.7Z" fill="#4a9a50" />
        <circle cx="50" cy="50" r="21.5" fill="#fff" />
        <circle cx="50" cy="50" r="16.5" fill="#4a7fe8" />
      </Tile>
    ),
  },
  {
    id: "safari",
    icon: (
      <Tile id="safari" bg={["#fff", "#d6d6d6"]}>
        <circle cx="50" cy="50" r="43" fill="#3a86ea" />
        {tooth.map((a) => (
          <path key={a} d="M50 9.5V15" stroke="#dfeaf8" strokeWidth="1" transform={`rotate(${a} 50 50)`} />
        ))}
        <path d="M82 24L56 56L44 46Z" fill="#e23d35" />
        <path d="M20 76L44 46L56 56Z" fill="#f1f1f1" />
      </Tile>
    ),
  },
  {
    id: "mail",
    running: true,
    badge: "5,692",
    icon: (
      <Tile id="mail" bg={["#3d76ee", "#5cc6fa"]}>
        <rect x="15" y="27" width="70" height="45" rx="5" fill="#ededee" />
        <path d="M17 70L40 48M83 70L60 48M17 29L45 57C48 60 52 60 55 57L83 29" fill="none" stroke="#9c9c9e" strokeWidth="2.5" />
      </Tile>
    ),
  },
  {
    id: "calendar",
    icon: (
      <Tile id="cal" bg={["#fff", "#eeede9"]}>
        <path d="M0 0H100V31H0Z" fill="#e8584e" />
        <T x={50} y={24} s={18} f="#fff">MAY</T>
        <T x={50} y={85} s={60} f="#2a2a2a" w={300}>4</T>
      </Tile>
    ),
  },
  {
    id: "notes",
    running: true,
    icon: (
      <Tile id="notes" bg={["#fbfaf8", "#e4e3dd"]}>
        <path d="M0 0H100V25H0Z" fill="#f7cd4b" />
        <path d="M0 26H100" stroke="#c9a94a" strokeWidth="2" />
        <path d="M2 31H98" stroke="#bdbdb9" strokeWidth="2" strokeDasharray="2 3" />
        <path d="M0 50H100M0 76H100" stroke="#d0cfcc" strokeWidth="2" />
      </Tile>
    ),
  },
  {
    id: "keynote",
    icon: (
      <Tile id="keynote" bg={["#5ec5fa", "#2f62ea"]}>
        <path d="M26 14H74L79 44H21Z" fill="#f6f6f7" />
        <path d="M28 39H73" stroke="#5f7f99" strokeWidth="2" />
        <circle cx="50" cy="26" r="9" fill="#7cc66a" />
        <path d="M50 26V17A9 9 0 0 1 59 26Z" fill="#35a8e0" />
        <path d="M50 26H41A9 9 0 0 1 50 17Z" fill="#e94f4a" />
        <path d="M50 26L44 33A9 9 0 0 1 41 26Z" fill="#f5b93c" />
        <path d="M50 45V83" stroke="#e4e7ea" strokeWidth="4" />
        <rect x="34" y="82" width="32" height="4" rx="2" fill="#dcdfe2" />
      </Tile>
    ),
  },
  {
    id: "settings",
    badge: "1",
    icon: (
      <Tile id="settings" bg={["#d4dde2", "#8c8a87"]}>
        <circle cx="50" cy="50" r="43" fill="#2c2c2d" />
        <circle cx="50" cy="50" r="38" fill="none" stroke="#b9babb" strokeWidth="4" strokeDasharray="2 1.5" />
        <circle cx="50" cy="50" r="33" fill="none" stroke="#a9aaab" strokeWidth="5" />
        <circle cx="50" cy="50" r="22" fill="none" stroke="#77787a" strokeWidth="4" strokeDasharray="2 1.5" />
        <path d="M50 50H84M50 50L33 20M50 50L33 80" stroke="#a9aaab" strokeWidth="5" />
        <circle cx="50" cy="50" r="6" fill="#8f9091" />
      </Tile>
    ),
  },
  {
    id: "spotify",
    running: true,
    icon: (
      <svg viewBox="0 0 100 100" className="size-[90px]">
        <circle cx="50" cy="50" r="50" fill="#65d46e" />
        <path d="M18 33C38 27 66 28 83 40" fill="none" stroke="#141414" strokeWidth="10" strokeLinecap="round" />
        <path d="M21 50C40 44 60 46 76 57" fill="none" stroke="#141414" strokeWidth="8.5" strokeLinecap="round" />
        <path d="M24 66C40 61 56 63 70 72" fill="none" stroke="#141414" strokeWidth="6.5" strokeLinecap="round" />
      </svg>
    ),
  },
  {
    id: "outlook",
    icon: (
      <Tile id="outlook" bg={["#fff", "#fff"]}>
        <path d="M28 17H80V26H28Z" fill="#2055a4" />
        <path d="M28 26H46V42H28Z" fill="#2b70cc" />
        <path d="M46 26H63V42H46Z" fill="#4aa9ea" />
        <path d="M63 26H80V42H63Z" fill="#79d8fb" />
        <path d="M28 42H63V58H28Z" fill="#2f78d0" />
        <path d="M63 42H80V58H63Z" fill="#4aa9ea" />
        <path d="M27 58L55 66L83 50V82H27Z" fill="#4ba0e4" />
        <path d="M55 66L83 50V82Z" fill="#3d8bd8" />
        <rect x="9" y="31" width="38" height="38" rx="4" fill="#2667c8" />
        <T x={28} y={59} s={27} f="#fff">O</T>
      </Tile>
    ),
  },
  {
    id: "excel",
    running: true,
    icon: (
      <Tile id="excel" bg={["#fff", "#fff"]}>
        <path d="M26 17H54V33H26Z" fill="#4ea36b" />
        <path d="M54 17H83V33H54Z" fill="#65c387" />
        <path d="M26 33H54V50H26Z" fill="#387f4d" />
        <path d="M54 33H83V50H54Z" fill="#4ea36b" />
        <path d="M26 50H54V83H26Z" fill="#2d5d3a" />
        <path d="M54 50H83V66H54Z" fill="#387f4d" />
        <path d="M54 66H83V83H54Z" fill="#2d5d3a" />
        <rect x="9" y="31" width="38" height="38" rx="4" fill="#337543" />
        <T x={28} y={60} s={28} f="#fff">X</T>
      </Tile>
    ),
  },
  {
    id: "whatsapp",
    running: true,
    icon: (
      <div className="flex size-[87px] items-center justify-center rounded-[20px] bg-gradient-to-b from-[#83ef7d] to-[#55bb47] text-white">
        <FaWhatsapp className="size-[74px]" />
      </div>
    ),
  },
  { id: "word", running: true, icon: <WordIcon id="word" /> },
  {
    id: "itsycal",
    running: true,
    icon: (
      <svg viewBox="0 0 100 100" className="size-[87px] overflow-visible">
        <path d="M7 4L78 0Q82 0 82 4V78L14 84Q8 84 8 80L4 10Q4 4 7 4Z" fill="#000" stroke="#fff" strokeWidth="3.5" />
        <path d="M20 17L92 12Q97 12 97 17V92L24 100Q19 100 19 96L16 22Q16 17 20 17Z" fill="#000" stroke="#fff" strokeWidth="3.5" />
        <path d="M24 38L89 32V83L25 90Z" fill="#fff" />
        <T x={57} y={81} s={53} f="#000" w={800}>4</T>
      </svg>
    ),
  },
  {
    id: "ring",
    icon: (
      <svg viewBox="0 0 100 100" className="-mt-[5px] size-[101px]">
        <circle cx="50" cy="50" r="50" fill="#fff" />
        <circle cx="50" cy="50" r="35" fill="none" stroke="#954c84" strokeWidth="18" />
      </svg>
    ),
  },
  {
    id: "iphone",
    icon: (
      <Tile id="iphone" bg={["#c8cacb", "#babbbb"]}>
        <rect x="30" y="7" width="40" height="85" rx="6" fill="#111" />
        <rect x="32" y="9" width="36" height="81" rx="4" fill="#f2b3a4" />
        <path d="M68 28C50 45 54 66 32 84V86C32 88 33 90 36 90H64C67 90 68 88 68 86Z" fill="#1d4a68" />
        <path d="M68 32C58 45 56 58 50 66L68 54Z" fill="#48a6bd" />
        <path d="M54 44L38 78L46 70Z" fill="#f7ece8" />
        <rect x="44" y="10" width="12" height="4" rx="2" fill="#111" />
      </Tile>
    ),
  },
  {
    id: "replit",
    icon: (
      <Tile id="replitapp" bg={["#1f2739", "#0c1220"]}>
        <rect x="26" y="19" width="26" height="21" rx="3" fill="#ea6a31" />
        <rect x="52" y="40" width="27" height="20" rx="3" fill="#ea6a31" />
        <rect x="26" y="60" width="26" height="21" rx="3" fill="#ea6a31" />
      </Tile>
    ),
  },
];

const moreApps: App[] = [
  { id: "acrobat", running: true, icon: <Acrobat id="acrobat" /> },
  {
    id: "preview",
    running: true,
    icon: (
      <div className="relative">
        <Preview id="preview" />
        <Loupe place="-right-[3px] -bottom-[5px] h-[50px] w-[52px]" />
      </div>
    ),
  },
  {
    id: "vscode",
    running: true,
    icon: (
      <Tile id="vscode" bg={["#fff", "#fff"]}>
        <path d="M66 15L84 23V77L66 85Z" fill="#4a97e8" />
        <path d="M66 15V36L22 69Q20 71 18 69L14 65Q13 63 14 62Z" fill="#275fa4" />
        <path d="M66 85V64L22 31Q20 29 18 31L14 35Q13 37 14 38Z" fill="#3577c8" />
      </Tile>
    ),
  },
  {
    id: "powerpoint",
    running: true,
    icon: (
      <Tile id="ppt" bg={["#fff", "#fff"]}>
        <circle cx="53" cy="50" r="33" fill="#e2704c" />
        <path d="M53 17A33 33 0 0 1 86 50H53Z" fill="#ef9271" />
        <path d="M20 50H86A33 33 0 0 1 20 50Z" fill="#c45433" />
        <rect x="12" y="31" width="37" height="38" rx="4" fill="#b53e1e" />
        <T x={30.5} y={60} s={27} f="#fff">P</T>
      </Tile>
    ),
  },
];

const DockApp = ({ app }: { app: App }) => (
  <div className="relative flex w-[115.15px] shrink-0 flex-col items-center">
    <div className="flex h-[104px] items-center pt-[19px]">{app.icon}</div>
    <span className={`mt-[18px] size-2 rounded-full ${app.running ? "bg-black" : "bg-transparent"}`} />
    {app.badge && (
      <span
        className={`absolute top-[8px] flex h-[42px] items-center justify-center rounded-full bg-[#dc4c3f] pb-px text-[25px] tracking-[-0.04em] text-white ${
          app.badge.length > 1 ? "left-[44px] w-[69px]" : "left-[73px] w-[42px]"
        }`}
      >
        {app.badge}
      </span>
    )}
  </div>
);

const lines = Array.from({ length: 11 }, (_, i) => 18 + i * 3.4);

function Dock() {
  return (
    <div className="ml-[98px] flex h-[138px] w-[3225px] items-start rounded-[44px] border-2 border-[#727272] bg-[#535353] pl-[4px]">
      {apps.map((a) => (
        <DockApp key={a.id} app={a} />
      ))}
      <span className="mt-4 mr-[24px] ml-[25px] h-[102px] w-[2px] shrink-0 bg-[#1c1c1c]" />
      {moreApps.map((a) => (
        <DockApp key={a.id} app={a} />
      ))}
      <span className="mt-4 ml-[25px] h-[102px] w-[2px] shrink-0 bg-[#1c1c1c]" />
      <svg viewBox="0 0 46 102" className="mt-[10px] ml-[60px] h-[102px] w-[46px] shrink-0">
        <rect x="5" y="1" width="36" height="12" fill="#555" stroke="#fff" strokeWidth="2" />
        <rect x="3" y="6" width="40" height="12" fill="#555" stroke="#fff" strokeWidth="2" />
        <rect y="11" width="46" height="91" fill="#fff" />
        <rect x="3" y="15" width="40" height="83" fill="#161b2d" />
        <rect x="3" y="15" width="40" height="9" fill="#3b3e42" />
        <rect x="4" y="28" width="38" height="13" fill="#f3f4f6" />
        <path d="M13 46H33M15 49H31" stroke="#8b90a0" strokeWidth="1.5" />
        <rect x="14" y="52" width="18" height="3" fill="#d8b23c" />
        <rect x="24" y="64" width="14" height="21" fill="#fff" />
        <rect x="26" y="79" width="10" height="2" fill="#e0b53a" />
        <path d="M8 66H16M8 71H15M8 76H17M8 81H15" stroke="#7b8193" strokeWidth="1.2" />
        <rect x="3" y="89" width="40" height="9" fill="#3b3e42" />
      </svg>
      <div className="relative mt-[39px] ml-[42px] h-[74px] w-[102px] shrink-0">
        <svg viewBox="0 0 102 46" className="h-[46px] w-[102px]">
          <rect width="102" height="46" fill="#fafafa" />
          <rect width="102" height="14" fill="#e9e9e9" />
          <path d="M4 6H24M28 6H34M40 6H60M66 6H98M4 11H84" stroke="#a8a8a8" strokeWidth="1.5" />
          <rect x="88" y="11" width="9" height="3" fill="#3d7fd0" />
          <path d="M6 20H20M6 24H16M6 28H18M30 20H42M30 24H40M30 28H42M50 20H60M50 24H60M50 28H60" stroke="#9a9a9a" strokeWidth="1" />
          <rect y="41" width="102" height="5" fill="#d5d5d5" />
        </svg>
        <div className="absolute right-0 bottom-0 origin-bottom-right scale-[0.38]">
          <Preview id="preview-mini" />
          <Loupe place="-right-[3px] -bottom-[5px] h-[50px] w-[52px]" />
        </div>
      </div>
      <div className="mt-[78px] ml-[81px] size-[34px] shrink-0">
        <div className="origin-top-left scale-[0.38]">
          <Acrobat id="acrobat-mini" />
        </div>
      </div>
      <div className="relative mt-[32px] ml-[14px] h-[79px] w-[101px] shrink-0">
        <svg viewBox="0 0 101 60" className="h-[60px] w-[101px]">
          <rect width="101" height="60" fill="#e8e8e8" />
          <rect width="101" height="3" fill="#2f56a8" />
          <rect y="3" width="101" height="7" fill="#f3f3f3" />
          <path d="M4 6H96" stroke="#b5b5b5" strokeDasharray="5 3" />
          <rect y="9.5" width="101" height="1.5" fill="#efe3b4" />
          <rect x="25" y="12" width="50" height="48" fill="#fff" />
          {lines.map((y) => (
            <path key={y} d={`M32 ${y}H69`} stroke="#a2a2a2" strokeWidth="1.5" />
          ))}
          <path d="M38 21H48M32 25H36" stroke="#e8da4e" strokeWidth="1.5" />
        </svg>
        <div className="absolute right-[2px] bottom-0 origin-bottom-right scale-[0.38]">
          <WordIcon id="word-mini" />
        </div>
      </div>
      <svg viewBox="0 0 80 100" className="mt-[10px] ml-[26px] h-[101px] w-20 shrink-0">
        <path d="M10 12L20 3L27 9L34 2L44 9L52 1L60 8L68 6L72 18H8Z" fill="#e8e8e6" />
        <path d="M18 14L30 8L38 16L28 22Z" fill="#49b9b3" />
        <path d="M44 10L60 12L54 22H44Z" fill="#8a4a35" />
        <path d="M30 16L40 10L44 20Z" fill="#4a4a4a" />
        <path d="M1 12Q2 22 40 23Q78 22 79 12L71 92Q68 99 40 99Q12 99 9 92Z" fill="#dcdbd7" fillOpacity="0.93" />
        <path d="M14 32L24 88M58 36L53 88M36 34L45 60L34 88" stroke="#d0cfcb" strokeWidth="4" fill="none" />
        <ellipse cx="40" cy="13" rx="39" ry="9" fill="none" stroke="#c4c4c2" strokeWidth="1.5" />
      </svg>
    </div>
  );
}

export default function App() {
  return (
    <div className="flex h-[2214px] w-[3420px] flex-col overflow-hidden bg-black font-['Inter',sans-serif]">
      <MenuBar />
      <div className="ml-[6px] flex h-[1972px] w-[3414px] shrink-0 flex-col overflow-hidden rounded-[20px] bg-[#d3e8c3]">
        <TabStrip />
        <Toolbar />
        <BookmarkBar />
        <WebPage />
      </div>
      <div className="mt-4">
        <Dock />
      </div>
    </div>
  );
}
